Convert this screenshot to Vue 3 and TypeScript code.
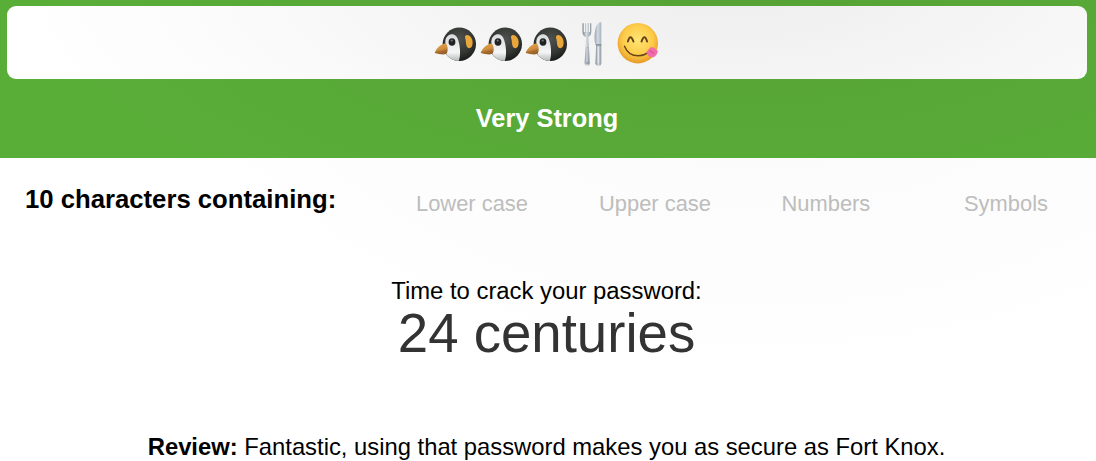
<script setup lang="ts">
const penguins: number[] = [1, 2, 3]
const categories: string[] = ['Lower case', 'Upper case', 'Numbers', 'Symbols']
</script>

<template>
  <main class="page">
    <section class="meter">
      <div class="field">
        <svg v-for="n in penguins" :key="n" class="penguin" viewBox="0 0 45 60">
          <defs>
            <radialGradient :id="'head' + n" cx=".5" cy=".35" r=".65">
              <stop offset="0" stop-color="#50524f" /><stop offset=".65" stop-color="#333532" /><stop offset="1" stop-color="#191b1a" />
            </radialGradient>
            <linearGradient :id="'face' + n" x1="0" y1="0" x2="0" y2="1">
              <stop offset="0" stop-color="#d8dade" /><stop offset=".65" stop-color="#f5f5f6" /><stop offset="1" stop-color="#aeb0b2" />
            </linearGradient>
            <linearGradient :id="'beak' + n" x1="0" y1="0" x2=".3" y2="1">
              <stop offset="0" stop-color="#e5a94b" /><stop offset=".6" stop-color="#d18f3e" /><stop offset="1" stop-color="#966029" />
            </linearGradient>
            <clipPath :id="'round' + n"><circle cx="26" cy="31.2" r="16.7" /></clipPath>
          </defs>
          <circle cx="26" cy="31.2" r="16.7" :fill="'url(#head' + n + ')'" />
          <g :clip-path="'url(#round' + n + ')'">
            <path d="M12 29C12 23.5 16 21 19.5 21.3C23.5 21.8 25.4 27 26.3 33C27.1 39 27 45 25 49C17 49 12 44 13 39Z" :fill="'url(#face' + n + ')'" />
          </g>
          <path d="M12.5 30.2C7.5 31.2 2.5 35.5 1.4 40C5.5 40.8 12 42.8 13.8 39.8C15 36.8 14.5 33 12.5 30.2Z" :fill="'url(#beak' + n + ')'" />
          <path d="M2 39.3Q8 39.2 13.2 37.5" fill="none" stroke="#9b622a" stroke-width=".7" />
          <ellipse cx="18.7" cy="29" rx="3.4" ry="3.8" fill="#202222" />
          <circle cx="18.4" cy="27.6" r="1.1" fill="#737573" />
          <path d="M31.7 24.6C31.4 21.7 34 21.2 36.1 22.8C39.4 25.2 40.2 30.4 38.5 33.4C37.3 35.6 34.7 35.7 33.6 33.7C32.1 30.8 33 28 31.7 24.6Z" fill="#e9a63b" />
        </svg>
        <svg class="cutlery" viewBox="0 0 45 60">
          <defs>
            <linearGradient id="steel" x1="0" x2="1">
              <stop offset="0" stop-color="#7d8790" /><stop offset=".45" stop-color="#d3dae0" /><stop offset="1" stop-color="#8f989f" />
            </linearGradient>
            <linearGradient id="blade" x1="0" x2="1">
              <stop offset="0" stop-color="#9aa4ae" /><stop offset=".5" stop-color="#d2dbe5" /><stop offset="1" stop-color="#a5b0bc" />
            </linearGradient>
          </defs>
          <path d="M12.2 10.2H13.5V19H14.7V10.2H16V19H17.2V10.2H18.5V19H19.7V10.2H21V19.5Q20.8 23 18 24.2L18.5 31L19.7 50Q19.6 52.8 17 52.8Q14.2 52.8 14.2 50L15.5 31L15.7 24.2Q12.5 23 12.2 19.5Z" fill="url(#steel)" />
          <path d="M15.6 35L14.9 49Q15.3 52.2 18.8 50.8L17.8 34Z" fill="#707a83" opacity=".5" />
          <path d="M16.7 35V49" stroke="#eef1f3" stroke-width=".9" />
          <path d="M31 9.2V32H25.2Q23.9 28 24.2 24Q24.4 15 26.9 11.5Q28.8 8.8 31 9.2Z" fill="url(#blade)" />
          <path d="M25.8 32H31V50.3Q30.9 52.8 28.2 52.8Q25.2 52.8 25.2 50.3Z" fill="url(#steel)" />
          <path d="M25.6 31.3H31V32.5H25.6Z" fill="#76818b" />
          <path d="M28 34V50" stroke="#eef1f3" stroke-width=".9" />
        </svg>
        <svg class="yum" viewBox="0 0 45 60">
          <defs>
            <radialGradient id="yellow" cx=".5" cy=".42" r=".58">
              <stop offset="0" stop-color="#ffe575" /><stop offset=".65" stop-color="#fdcb48" /><stop offset="1" stop-color="#e69a28" />
            </radialGradient>
          </defs>
          <circle cx="22.5" cy="30.2" r="20.2" fill="url(#yellow)" />
          <path d="M12.6 28.6Q15 19.8 18.2 28.6M26.2 28.6Q29.2 19.8 31.8 28.6" fill="none" stroke="#66421a" stroke-width="1.9" stroke-linecap="round" />
          <path d="M9.2 33.2Q13 42.8 22.8 42.8Q31 42.8 35 36.5" fill="none" stroke="#69431a" stroke-width="1.5" stroke-linecap="round" />
          <path d="M31 39.4Q33 36.8 35.6 34.1Q40.4 35 42.5 38.2Q41.8 42.4 38.2 44.2Q33.5 45 31 39.4Z" fill="#f16caa" />
          <path d="M34.3 37.5L38.5 40.3" stroke="#ce4685" stroke-width="1" />
        </svg>
      </div>
      <div class="strength">Very Strong</div>
    </section>
    <section class="contents">
      <h2>10 characters containing:</h2>
      <ul>
        <li v-for="category in categories" :key="category">{{ category }}</li>
      </ul>
    </section>
    <section class="result">
      <p class="label">Time to crack your password:</p>
      <p class="duration">24 centuries</p>
    </section>
    <p class="review"><b>Review:</b> Fantastic, using that password makes you as secure as Fort Knox.</p>
  </main>
</template>

<style>
body { margin: 0; overflow: hidden; }
</style>

<style scoped>
* { box-sizing: border-box; }
.page {
  width: 1096px;
  height: 461px;
  overflow: hidden;
  color: #000;
  font-family: "Liberation Sans", Arial, sans-serif;
  background: radial-gradient(ellipse 620px 370px at 760px 0, #f8f8f8, #fcfcfc 55%, #fefefe 90%, #fff);
}
.meter {
  height: 158px;
  padding: 6px 9px 0 7px;
  background: radial-gradient(ellipse 720px 260px at 740px 0, #57a336, #58aa37 65%, #59ae38);
}
.field {
  height: 73px;
  border-radius: 9px;
  display: flex;
  justify-content: center;
  align-items: center;
  background: radial-gradient(ellipse 720px 235px at 720px -15px, #eee, #f4f4f4 35%, #fbfbfb 72%, #fff);
}
.field svg { width: 45.6px; height: 60px; flex: none; }
.strength {
  padding-top: 24px;
  text-align: center;
  color: #fff;
  font-size: 25.4px;
  font-weight: 700;
  line-height: 30px;
}
.contents {
  height: 119px;
  padding: 26px 0 0 25px;
  display: flex;
}
h2 { width: 391px; margin: 0; font-size: 25.7px; line-height: 30px; }
ul { margin: 5px 0 0; padding: 0; list-style: none; display: grid; grid-template-columns: 183px 182.5px 182.5px 130px; }
li { font-size: 21.9px; line-height: 30px; color: #bdbdbd; white-space: nowrap; }
.result { height: 150px; padding-right: 3px; text-align: center; }
p { margin: 0; }
.label { font-size: 23.85px; line-height: 28px; }
.duration { font-size: 54.6px; line-height: 57px; color: #333; }
.review { padding-right: 3px; font-size: 23.8px; line-height: 40px; text-align: center; white-space: nowrap; }
</style>
